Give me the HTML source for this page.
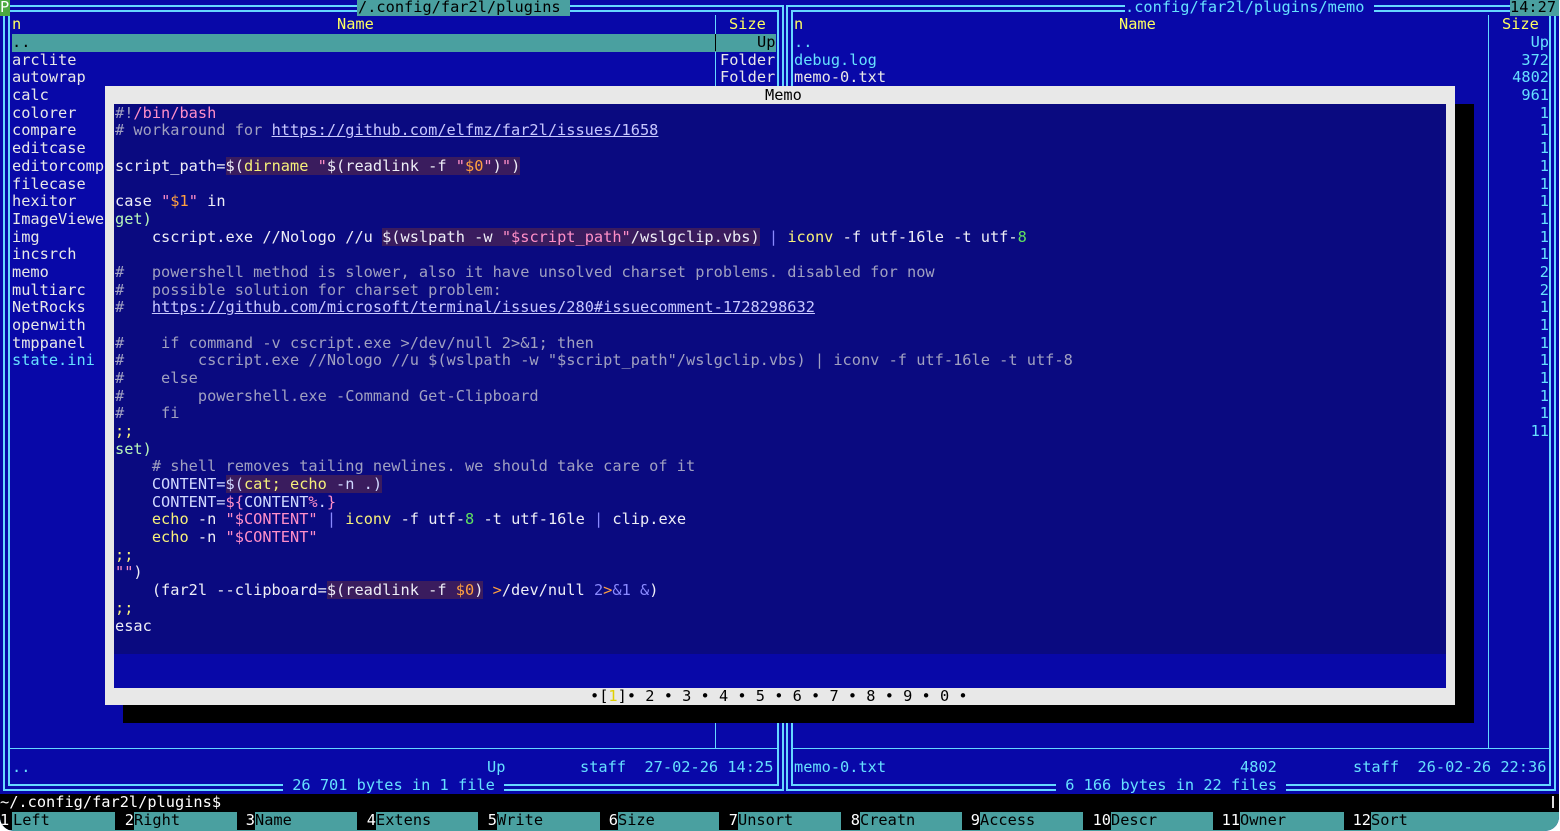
<!DOCTYPE html>
<html><head><meta charset="utf-8"><style>
*{margin:0;padding:0;box-sizing:border-box}
body{width:1560px;height:831px;background:#fff;overflow:hidden;position:relative;font-family:"DejaVu Sans Mono","Liberation Mono",monospace;font-size:15.3px;}
#w{position:absolute;left:0;top:0;width:1559px;height:831px;background:#0808a8;border-radius:0 0 14px 14px;overflow:hidden}
.t{position:absolute;top:calc(var(--r)*17.68px - 1.3px);height:17.68px;line-height:17.68px;white-space:pre;color:#e8e8e8}
.y{color:#ffff60}.c{color:#66e0ff}.k{color:#000}
.box{position:absolute;border:7px double #66d8ff}
.vl{position:absolute;width:1px;background:#66d8ff}
.hl{position:absolute;height:1px;background:#66d8ff}
.r{text-align:right}
.code .t{color:#eeeef6}
.code .g{color:#a0a0c0}.code .u{color:#c8c8ff;text-decoration:underline}
.code .p{color:#ff8fc8}.code .o{color:#ffa040}.code .ye{color:#f6f07a}.code .gr{color:#b8f5b8}.code .bl{color:#8a8aff}.code .n8{color:#60e060}
.bg{background:#3a1c5e}.code .lb{color:#d0d8ff}
</style></head><body><div id="w">

<div class="box" style="left:3px;top:5px;width:781px;height:786px"></div>
<div class="box" style="left:786px;top:5px;width:770px;height:786px"></div>
<div class="vl" style="left:715px;top:15px;height:733px"></div>
<div class="vl" style="left:1488px;top:15px;height:733px"></div>
<div class="hl" style="left:9px;top:748px;width:769px"></div>
<div class="hl" style="left:792px;top:748px;width:758px"></div>

<div class="t k" style="--r:0;left:0;width:10px;background:#4caa40;color:#fff">P</div>
<div class="t k" style="--r:0;left:357px;width:213px;background:#4aa0a0;padding-left:1px">/.config/far2l/plugins</div>
<div class="t c" style="--r:0;left:1125px;background:#0808a8">.config/far2l/plugins/memo </div>
<div class="t k" style="--r:0;left:1510px;width:49px;background:#4aa0a0">14:27</div>

<div class="t y" style="--r:1;left:12px">n</div>
<div class="t y" style="--r:1;left:337px">Name</div>
<div class="t y" style="--r:1;left:729px">Size</div>
<div class="t y" style="--r:1;left:794px">n</div>
<div class="t y" style="--r:1;left:1119px">Name</div>
<div class="t y" style="--r:1;left:1502px">Size</div>

<div class="t k" style="--r:2;left:12px;width:764px;background:#4aa0a0">..</div>
<div class="vl" style="left:715px;top:34px;height:17px;background:#000"></div>
<div class="t k" style="--r:2;left:757px">Up</div>

<div class="t" style="--r:3;left:12px">arclite</div>
<div class="t" style="--r:4;left:12px">autowrap</div>
<div class="t" style="--r:5;left:12px">calc</div>
<div class="t" style="--r:6;left:12px">colorer</div>
<div class="t" style="--r:7;left:12px">compare</div>
<div class="t" style="--r:8;left:12px">editcase</div>
<div class="t" style="--r:9;left:12px">editorcomp</div>
<div class="t" style="--r:10;left:12px">filecase</div>
<div class="t" style="--r:11;left:12px">hexitor</div>
<div class="t" style="--r:12;left:12px">ImageViewe</div>
<div class="t" style="--r:13;left:12px">img</div>
<div class="t" style="--r:14;left:12px">incsrch</div>
<div class="t" style="--r:15;left:12px">memo</div>
<div class="t" style="--r:16;left:12px">multiarc</div>
<div class="t" style="--r:17;left:12px">NetRocks</div>
<div class="t" style="--r:18;left:12px">openwith</div>
<div class="t" style="--r:19;left:12px">tmppanel</div>
<div class="t c" style="--r:20;left:12px">state.ini</div>
<div class="t" style="--r:3;left:720px">Folder</div>
<div class="t" style="--r:4;left:720px">Folder</div>

<div class="t c" style="--r:2;left:794px">..</div>
<div class="t c" style="--r:3;left:794px">debug.log</div>
<div class="t" style="--r:4;left:794px">memo-0.txt</div>
<div class="t c r" style="--r:2;left:1450px;width:99px">Up</div>
<div class="t c r" style="--r:3;left:1450px;width:99px">372</div>
<div class="t c r" style="--r:4;left:1450px;width:99px">4802</div>
<div class="t c r" style="--r:5;left:1450px;width:99px">961</div>
<div class="t c r" style="--r:6;left:1450px;width:99px">1</div>
<div class="t c r" style="--r:7;left:1450px;width:99px">1</div>
<div class="t c r" style="--r:8;left:1450px;width:99px">1</div>
<div class="t c r" style="--r:9;left:1450px;width:99px">1</div>
<div class="t c r" style="--r:10;left:1450px;width:99px">1</div>
<div class="t c r" style="--r:11;left:1450px;width:99px">1</div>
<div class="t c r" style="--r:12;left:1450px;width:99px">1</div>
<div class="t c r" style="--r:13;left:1450px;width:99px">1</div>
<div class="t c r" style="--r:14;left:1450px;width:99px">1</div>
<div class="t c r" style="--r:15;left:1450px;width:99px">2</div>
<div class="t c r" style="--r:16;left:1450px;width:99px">2</div>
<div class="t c r" style="--r:17;left:1450px;width:99px">1</div>
<div class="t c r" style="--r:18;left:1450px;width:99px">1</div>
<div class="t c r" style="--r:19;left:1450px;width:99px">1</div>
<div class="t c r" style="--r:20;left:1450px;width:99px">1</div>
<div class="t c r" style="--r:21;left:1450px;width:99px">1</div>
<div class="t c r" style="--r:22;left:1450px;width:99px">1</div>
<div class="t c r" style="--r:23;left:1450px;width:99px">1</div>
<div class="t c r" style="--r:24;left:1450px;width:99px">11</div>

<div class="t c" style="--r:43;left:12px">..</div>
<div class="t c" style="--r:43;left:487px">Up</div>
<div class="t c" style="--r:43;left:580px">staff  27-02-26 14:25</div>
<div class="t c" style="--r:43;left:794px">memo-0.txt</div>
<div class="t c" style="--r:43;left:1240px">4802</div>
<div class="t c" style="--r:43;left:1353px">staff  26-02-26 22:36</div>
<div class="t c" style="--r:44;left:283px;background:#0808a8"> 26 701 bytes in 1 file </div>
<div class="t c" style="--r:44;left:1056px;background:#0808a8"> 6 166 bytes in 22 files </div>

<div class="t" style="--r:45;left:0;width:1560px;background:#000;color:#fff">~/.config/far2l/plugins$</div>
<div style="position:absolute;left:1552px;top:796px;width:2px;height:12px;background:#ddd"></div>
<div style="position:absolute;left:0;top:812px;width:1560px;height:20px;background:#4aa0a0"></div>
<div class="t" style="--r:46;left:0;width:12px;background:#000;color:#fff">1</div><div class="t k" style="--r:46;left:13px">Left</div>
<div class="t r" style="--r:46;left:115px;width:19px;background:#000;color:#fff">2</div><div class="t k" style="--r:46;left:134px">Right</div>
<div class="t r" style="--r:46;left:237px;width:18px;background:#000;color:#fff">3</div><div class="t k" style="--r:46;left:255px">Name</div>
<div class="t r" style="--r:46;left:357px;width:19px;background:#000;color:#fff">4</div><div class="t k" style="--r:46;left:376px">Extens</div>
<div class="t r" style="--r:46;left:478px;width:19px;background:#000;color:#fff">5</div><div class="t k" style="--r:46;left:497px">Write</div>
<div class="t r" style="--r:46;left:600px;width:18px;background:#000;color:#fff">6</div><div class="t k" style="--r:46;left:618px">Size</div>
<div class="t r" style="--r:46;left:719px;width:19px;background:#000;color:#fff">7</div><div class="t k" style="--r:46;left:738px">Unsort</div>
<div class="t r" style="--r:46;left:841px;width:19px;background:#000;color:#fff">8</div><div class="t k" style="--r:46;left:860px">Creatn</div>
<div class="t r" style="--r:46;left:962px;width:18px;background:#000;color:#fff">9</div><div class="t k" style="--r:46;left:980px">Access</div>
<div class="t r" style="--r:46;left:1083px;width:28px;background:#000;color:#fff">10</div><div class="t k" style="--r:46;left:1111px">Descr</div>
<div class="t r" style="--r:46;left:1213px;width:27px;background:#000;color:#fff">11</div><div class="t k" style="--r:46;left:1240px">Owner</div>
<div class="t r" style="--r:46;left:1344px;width:27px;background:#000;color:#fff">12</div><div class="t k" style="--r:46;left:1371px">Sort</div>

<div style="position:absolute;left:1455px;top:104px;width:19px;height:619px;background:#000"></div>
<div style="position:absolute;left:123px;top:705px;width:1351px;height:18px;background:#000"></div>
<div style="position:absolute;left:105px;top:86px;width:1350px;height:619px;background:#e8e8e8"></div>
<div style="position:absolute;left:114px;top:104px;width:1332px;height:550px;background:#0a0a80"></div>
<div style="position:absolute;left:114px;top:654px;width:1332px;height:34px;background:#0808a8"></div>
<div class="t k" style="--r:5;left:765px">Memo</div>
<div class="t k" style="--r:39;left:590px">•[<span style="color:#e0d000">1</span>]• 2 • 3 • 4 • 5 • 6 • 7 • 8 • 9 • 0 •</div>

<div class="code">
<div class="t" style="--r:6;left:115px"><span class="g">#!</span><span class="p">/bin/bash</span></div>
<div class="t g" style="--r:7;left:115px"># workaround for <span class="u">https://github.com/elfmz/far2l/issues/1658</span></div>
<div class="t" style="--r:9;left:115px">script_path=<span class="bg">$(<span class="ye">dirname</span> <span class="p">"</span>$(readlink -f <span class="p">"</span><span class="o">$0</span><span class="p">"</span>)<span class="p">"</span>)</span></div>
<div class="t" style="--r:11;left:115px">case <span class="p">"</span><span class="o">$1</span><span class="p">"</span> in</div>
<div class="t gr" style="--r:12;left:115px">get)</div>
<div class="t" style="--r:13;left:115px">    cscript.exe //Nologo //u <span class="bg">$(wslpath -w <span class="p">"$script_path"</span>/wslgclip.vbs)</span> <span class="bl">|</span> <span class="ye">iconv</span> -f utf-16le -t utf-<span class="n8">8</span></div>
<div class="t g" style="--r:15;left:115px">#   powershell method is slower, also it have unsolved charset problems. disabled for now</div>
<div class="t g" style="--r:16;left:115px">#   possible solution for charset problem:</div>
<div class="t g" style="--r:17;left:115px">#   <span class="u">https://github.com/microsoft/terminal/issues/280#issuecomment-1728298632</span></div>
<div class="t g" style="--r:19;left:115px">#    if command -v cscript.exe >/dev/null 2>&amp;1; then</div>
<div class="t g" style="--r:20;left:115px">#        cscript.exe //Nologo //u $(wslpath -w "$script_path"/wslgclip.vbs) | iconv -f utf-16le -t utf-8</div>
<div class="t g" style="--r:21;left:115px">#    else</div>
<div class="t g" style="--r:22;left:115px">#        powershell.exe -Command Get-Clipboard</div>
<div class="t g" style="--r:23;left:115px">#    fi</div>
<div class="t ye" style="--r:24;left:115px">;;</div>
<div class="t gr" style="--r:25;left:115px">set)</div>
<div class="t g" style="--r:26;left:115px">    # shell removes tailing newlines. we should take care of it</div>
<div class="t lb" style="--r:27;left:115px">    CONTENT=<span class="bg">$(<span class="ye">cat; echo</span> -n .)</span></div>
<div class="t lb" style="--r:28;left:115px">    CONTENT=<span class="p">${</span>CONTENT<span class="p">%</span>.<span class="p">}</span></div>
<div class="t" style="--r:29;left:115px">    <span class="ye">echo</span> -n <span class="p">"$CONTENT"</span> <span class="bl">|</span> <span class="ye">iconv</span> -f utf-<span class="n8">8</span> -t utf-16le <span class="bl">|</span> clip.exe</div>
<div class="t" style="--r:30;left:115px">    <span class="ye">echo</span> -n <span class="p">"$CONTENT"</span></div>
<div class="t ye" style="--r:31;left:115px">;;</div>
<div class="t" style="--r:32;left:115px"><span class="p">""</span>)</div>
<div class="t" style="--r:33;left:115px">    (far2l --clipboard=<span class="bg">$(readlink -f <span class="o">$0</span>)</span> <span class="o">&gt;</span>/dev/null <span class="bl">2</span><span class="o">&gt;</span><span class="bl">&amp;1 &amp;</span>)</div>
<div class="t ye" style="--r:34;left:115px">;;</div>
<div class="t" style="--r:35;left:115px">esac</div>
</div>

</div></body></html>
